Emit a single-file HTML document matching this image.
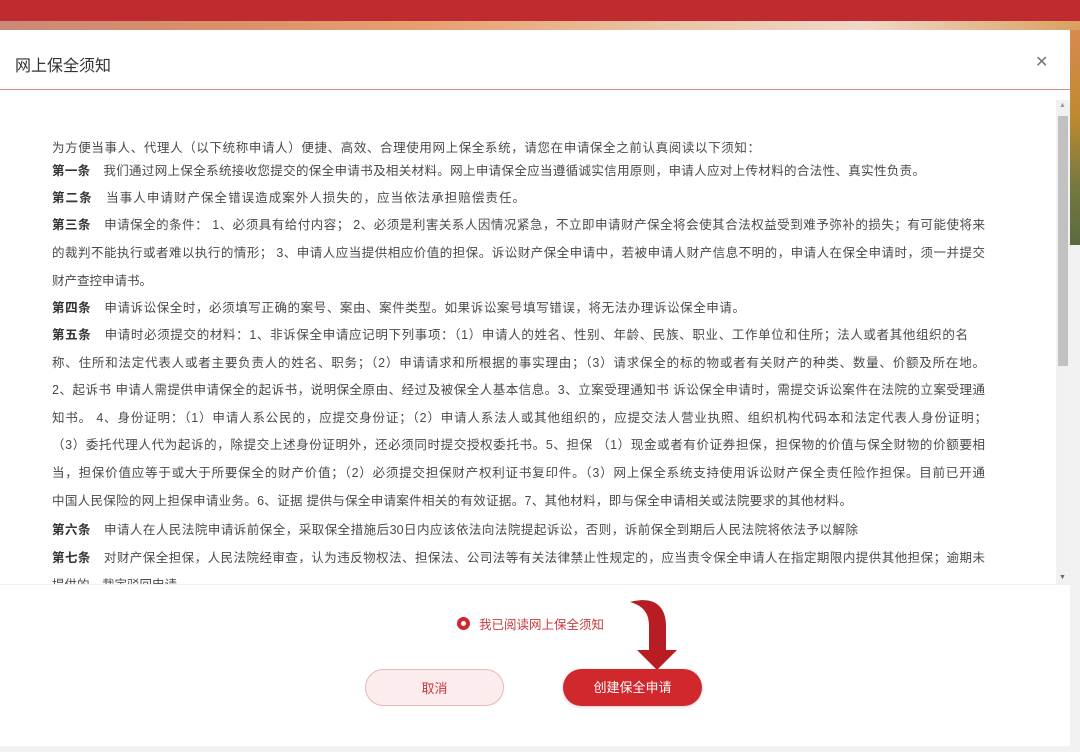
<!DOCTYPE html>
<html><head><meta charset="utf-8">
<style>
*{margin:0;padding:0;box-sizing:border-box}
body{width:1080px;height:752px;overflow:hidden;position:relative;background:#f2f2f2;font-family:"Liberation Sans","Noto Sans CJK SC",sans-serif}
.top{position:absolute;left:0;top:0;width:1080px;height:21px;background:#bf2b2e}
.strip{position:absolute;left:0;top:21px;width:1080px;height:12px;background:linear-gradient(90deg,#c98a78,#d9906a 20%,#e8a070 40%,#e9c2a0 60%,#f0d8c8 80%,#d9a060)}
.side{position:absolute;left:1070px;top:30px;width:10px;height:215px;background:linear-gradient(180deg,#d88a50,#c08a30 40%,#7a7a40 70%,#5a6a40)}
.modal{position:absolute;left:0;top:30px;width:1070px;height:716px;background:#fff}
.title{position:absolute;left:15px;top:52px;font-size:16px;color:#333}
.close{position:absolute;left:1035px;top:52px;font-size:16px;color:#777;font-weight:300}
.hline{position:absolute;left:0;top:89px;width:1070px;height:1px;background:#d98c8c}
.box{position:absolute;left:0;top:100px;width:1070px;height:485px;overflow:hidden;background:#fff;border-bottom:1px solid #eee}
.sb{position:absolute;left:1056px;top:100px;width:14px;height:485px;background:#f1f1f1}
.thumb{position:absolute;left:1058px;top:116px;width:10px;height:250px;background:#c1c1c1}
.l{position:absolute;left:52px;font-size:12.5px;color:#4a4a4a;white-space:nowrap;text-align:justify;text-align-last:justify;height:18px;line-height:18px}
.l b{color:#333;font-weight:bold}
.radio{position:absolute;left:457px;top:617px;width:13px;height:13px;border-radius:50%;background:#d0282c}
.radio:after{content:"";position:absolute;left:4px;top:4px;width:5px;height:5px;border-radius:50%;background:#fff}
.rtxt{position:absolute;left:479px;top:614px;font-size:12.5px;color:#c9393c}
.btn{position:absolute;top:669px;width:139px;height:37px;border-radius:19px;font-size:13px;text-align:center;line-height:37px}
.c1{left:365px;background:#fdeced;border:1px solid #eab6b6;color:#c9393c}
.c2{left:563px;background:#d0282c;color:#fff;box-shadow:0 1px 3px rgba(0,0,0,.2)}
</style></head><body>
<div class="top"></div><div class="strip"></div><div class="side"></div>
<div class="modal"></div>
<div class="title">网上保全须知</div>
<div class="close">✕</div>
<div class="hline"></div>
<div class="box">
<div class="l" style="top:39px;width:708px">为方便当事人、代理人（以下统称申请人）便捷、高效、合理使用网上保全系统，请您在申请保全之前认真阅读以下须知：</div>
<div class="l" style="top:62px;width:873px"><b>第一条</b>　我们通过网上保全系统接收您提交的保全申请书及相关材料。网上申请保全应当遵循诚实信用原则，申请人应对上传材料的合法性、真实性负责。</div>
<div class="l" style="top:89px;width:473px"><b>第二条</b>　当事人申请财产保全错误造成案外人损失的，应当依法承担赔偿责任。</div>
<div class="l" style="top:116px;width:933px"><b>第三条</b>　申请保全的条件： 1、必须具有给付内容； 2、必须是利害关系人因情况紧急，不立即申请财产保全将会使其合法权益受到难予弥补的损失；有可能使将来</div>
<div class="l" style="top:144px;width:933px">的裁判不能执行或者难以执行的情形； 3、申请人应当提供相应价值的担保。诉讼财产保全申请中，若被申请人财产信息不明的，申请人在保全申请时，须一并提交</div>
<div class="l" style="top:172px;width:96px">财产查控申请书。</div>
<div class="l" style="top:199px;width:693px"><b>第四条</b>　申请诉讼保全时，必须填写正确的案号、案由、案件类型。如果诉讼案号填写错误，将无法办理诉讼保全申请。</div>
<div class="l" style="top:226px;width:916px"><b>第五条</b>　申请时必须提交的材料：1、非诉保全申请应记明下列事项：（1）申请人的姓名、性别、年龄、民族、职业、工作单位和住所；法人或者其他组织的名</div>
<div class="l" style="top:254px;width:933px">称、住所和法定代表人或者主要负责人的姓名、职务；（2）申请请求和所根据的事实理由；（3）请求保全的标的物或者有关财产的种类、数量、价额及所在地。</div>
<div class="l" style="top:281px;width:933px">2、起诉书 申请人需提供申请保全的起诉书，说明保全原由、经过及被保全人基本信息。3、立案受理通知书 诉讼保全申请时，需提交诉讼案件在法院的立案受理通</div>
<div class="l" style="top:309px;width:935px">知书。 4、身份证明：（1）申请人系公民的，应提交身份证；（2）申请人系法人或其他组织的，应提交法人营业执照、组织机构代码本和法定代表人身份证明；</div>
<div class="l" style="top:336px;width:933px">（3）委托代理人代为起诉的，除提交上述身份证明外，还必须同时提交授权委托书。5、担保 （1）现金或者有价证券担保，担保物的价值与保全财物的价额要相</div>
<div class="l" style="top:364px;width:933px">当，担保价值应等于或大于所要保全的财产价值；（2）必须提交担保财产权利证书复印件。（3）网上保全系统支持使用诉讼财产保全责任险作担保。目前已开通</div>
<div class="l" style="top:392px;width:800px">中国人民保险的网上担保申请业务。6、证据 提供与保全申请案件相关的有效证据。7、其他材料，即与保全申请相关或法院要求的其他材料。</div>
<div class="l" style="top:421px;width:806px"><b>第六条</b>　申请人在人民法院申请诉前保全，采取保全措施后30日内应该依法向法院提起诉讼，否则，诉前保全到期后人民法院将依法予以解除</div>
<div class="l" style="top:449px;width:933px"><b>第七条</b>　对财产保全担保，人民法院经审查，认为违反物权法、担保法、公司法等有关法律禁止性规定的，应当责令保全申请人在指定期限内提供其他担保；逾期未</div>
<div class="l" style="top:476px;width:130px">提供的，裁定驳回申请。</div>
</div>
<div class="sb"></div><div class="thumb"></div>
<div style="position:absolute;left:1059px;top:102px;font-size:7px;color:#999">▲</div>
<div style="position:absolute;left:1059px;top:574px;font-size:7px;color:#666">▼</div>
<div class="radio"></div>
<div class="rtxt">我已阅读网上保全须知</div>
<div class="btn c1">取消</div>
<div class="btn c2">创建保全申请</div>
<svg style="position:absolute;left:620px;top:596px" width="70" height="80" viewBox="0 0 70 80">
<path d="M10 6 C32 0 46 8 46 30 L46 54 L57 54 L37 74 L17 54 L29 54 L29 30 C29 18 24 10 10 6 Z" fill="#b71d22"/>
</svg>
</body></html>
